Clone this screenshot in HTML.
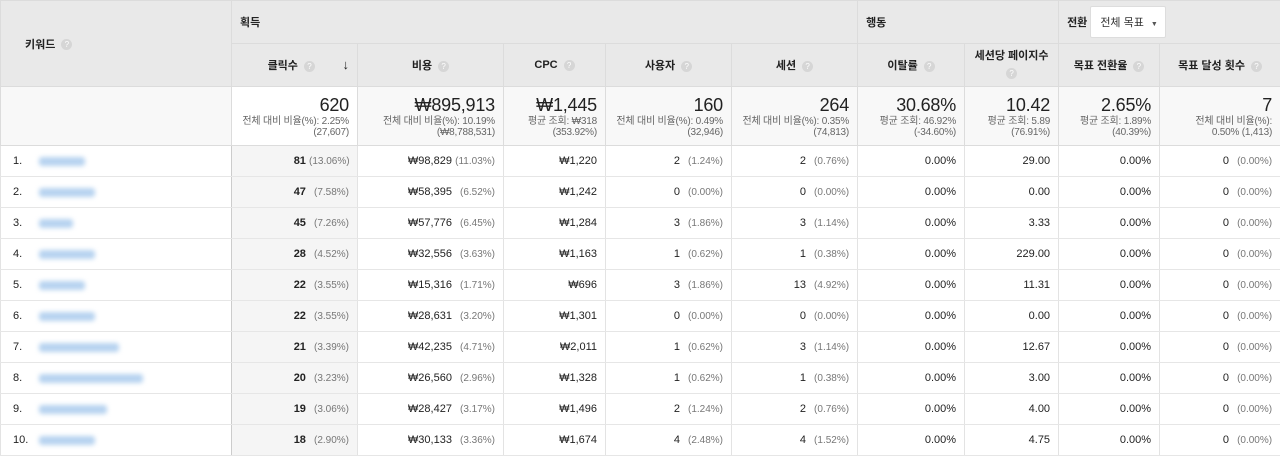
<!DOCTYPE html><html><head><meta charset="utf-8"><style>
body{margin:0;width:1280px;height:456px;overflow:hidden;background:#fff;font-family:"Liberation Sans","Noto Sans CJK KR",sans-serif;color:#222}
table{border-collapse:collapse;table-layout:fixed;width:1280px}
td,th{padding:0 8px;border:1px solid #dcdcdc;font-size:11px;overflow:hidden;white-space:nowrap}
th{background:#e9e9e9;font-weight:bold;color:#222}
.g{text-align:left;height:42px;vertical-align:middle}
.h{height:42px;text-align:center}
.q{display:inline-block;width:11px;height:11px;border-radius:50%;background:#d6d6d6;color:#fff;font-size:8px;line-height:11px;text-align:center;margin-left:6px;vertical-align:middle;font-weight:normal}
.tot td{height:58px;background:#f8f8f8;text-align:right;vertical-align:middle;color:#666;font-size:10px;line-height:11px;letter-spacing:-0.2px}
.tot td.w{background:#fff}
.tot b{display:block;font-size:18px;font-weight:normal;color:#222;line-height:21px}
.r td{height:30px;text-align:right;border-left:1px solid #e3e3e3;border-right:1px solid #e3e3e3;border-top:1px solid #e6e6e6;border-bottom:1px solid #e6e6e6}
.r td.k{text-align:left;border-right:1px solid #ccc;padding-left:12px}
.r td.s{background:#f5f5f5}
.p{color:#777;font-size:10px;display:inline-block;width:40px;text-align:right}
.n{display:inline-block;width:26px}
.bl{display:inline-block;height:9px;background:#b7d3f0;filter:blur(2.5px);vertical-align:middle;border-radius:3px}
.sel{display:inline-block;background:#fff;border:1px solid #ddd;border-radius:2px;padding:7px 7px 7px 9px;font-weight:normal;margin-left:3px;font-size:11px;color:#333}
.sel i{font-style:normal;font-size:7px;margin-left:7px;color:#555}
</style></head><body>
<table>
<colgroup><col style="width:231px"><col style="width:126px"><col style="width:146px"><col style="width:102px"><col style="width:126px"><col style="width:126px"><col style="width:107px"><col style="width:94px"><col style="width:101px"><col style="width:121px"></colgroup>
<tr><th rowspan="2" style="text-align:left;padding-left:24px">키워드<span class="q">?</span></th><th colspan="5" class="g">획득</th><th colspan="2" class="g">행동</th><th colspan="2" class="g">전환<span class="sel">전체 목표<i>▼</i></span></th></tr>
<tr><th class="h">클릭수<span class="q">?</span><span style="float:right;font-size:13px">↓</span></th><th class="h">비용<span class="q">?</span></th><th class="h">CPC<span class="q">?</span></th><th class="h">사용자<span class="q">?</span></th><th class="h">세션<span class="q">?</span></th><th class="h">이탈률<span class="q">?</span></th><th class="h" style="line-height:17px">세션당 페이지수<br><span class="q" style="margin:0">?</span></th><th class="h">목표 전환율<span class="q">?</span></th><th class="h">목표 달성 횟수<span class="q">?</span></th></tr>
<tr class="tot"><td></td><td class="w"><b>620</b>전체 대비 비율(%): 2.25%<br>(27,607)</td><td><b>₩895,913</b>전체 대비 비율(%): 10.19%<br>(₩8,788,531)</td><td><b>₩1,445</b>평균 조회: ₩318<br>(353.92%)</td><td><b>160</b>전체 대비 비율(%): 0.49%<br>(32,946)</td><td><b>264</b>전체 대비 비율(%): 0.35%<br>(74,813)</td><td><b>30.68%</b>평균 조회: 46.92%<br>(-34.60%)</td><td><b>10.42</b>평균 조회: 5.89<br>(76.91%)</td><td><b>2.65%</b>평균 조회: 1.89%<br>(40.39%)</td><td><b>7</b>전체 대비 비율(%):<br>0.50% (1,413)</td></tr>
<tr class="r"><td class="k"><span class="n">1.</span><span class="bl" style="width:46px"></span></td><td class="s"><b>81</b> <span class="p">(13.06%)</span></td><td>₩98,829 <span class="p">(11.03%)</span></td><td>₩1,220</td><td>2 <span class="p">(1.24%)</span></td><td>2 <span class="p">(0.76%)</span></td><td>0.00%</td><td>29.00</td><td>0.00%</td><td>0 <span class="p">(0.00%)</span></td></tr>
<tr class="r"><td class="k"><span class="n">2.</span><span class="bl" style="width:56px"></span></td><td class="s"><b>47</b> <span class="p">(7.58%)</span></td><td>₩58,395 <span class="p">(6.52%)</span></td><td>₩1,242</td><td>0 <span class="p">(0.00%)</span></td><td>0 <span class="p">(0.00%)</span></td><td>0.00%</td><td>0.00</td><td>0.00%</td><td>0 <span class="p">(0.00%)</span></td></tr>
<tr class="r"><td class="k"><span class="n">3.</span><span class="bl" style="width:34px"></span></td><td class="s"><b>45</b> <span class="p">(7.26%)</span></td><td>₩57,776 <span class="p">(6.45%)</span></td><td>₩1,284</td><td>3 <span class="p">(1.86%)</span></td><td>3 <span class="p">(1.14%)</span></td><td>0.00%</td><td>3.33</td><td>0.00%</td><td>0 <span class="p">(0.00%)</span></td></tr>
<tr class="r"><td class="k"><span class="n">4.</span><span class="bl" style="width:56px"></span></td><td class="s"><b>28</b> <span class="p">(4.52%)</span></td><td>₩32,556 <span class="p">(3.63%)</span></td><td>₩1,163</td><td>1 <span class="p">(0.62%)</span></td><td>1 <span class="p">(0.38%)</span></td><td>0.00%</td><td>229.00</td><td>0.00%</td><td>0 <span class="p">(0.00%)</span></td></tr>
<tr class="r"><td class="k"><span class="n">5.</span><span class="bl" style="width:46px"></span></td><td class="s"><b>22</b> <span class="p">(3.55%)</span></td><td>₩15,316 <span class="p">(1.71%)</span></td><td>₩696</td><td>3 <span class="p">(1.86%)</span></td><td>13 <span class="p">(4.92%)</span></td><td>0.00%</td><td>11.31</td><td>0.00%</td><td>0 <span class="p">(0.00%)</span></td></tr>
<tr class="r"><td class="k"><span class="n">6.</span><span class="bl" style="width:56px"></span></td><td class="s"><b>22</b> <span class="p">(3.55%)</span></td><td>₩28,631 <span class="p">(3.20%)</span></td><td>₩1,301</td><td>0 <span class="p">(0.00%)</span></td><td>0 <span class="p">(0.00%)</span></td><td>0.00%</td><td>0.00</td><td>0.00%</td><td>0 <span class="p">(0.00%)</span></td></tr>
<tr class="r"><td class="k"><span class="n">7.</span><span class="bl" style="width:80px"></span></td><td class="s"><b>21</b> <span class="p">(3.39%)</span></td><td>₩42,235 <span class="p">(4.71%)</span></td><td>₩2,011</td><td>1 <span class="p">(0.62%)</span></td><td>3 <span class="p">(1.14%)</span></td><td>0.00%</td><td>12.67</td><td>0.00%</td><td>0 <span class="p">(0.00%)</span></td></tr>
<tr class="r"><td class="k"><span class="n">8.</span><span class="bl" style="width:104px"></span></td><td class="s"><b>20</b> <span class="p">(3.23%)</span></td><td>₩26,560 <span class="p">(2.96%)</span></td><td>₩1,328</td><td>1 <span class="p">(0.62%)</span></td><td>1 <span class="p">(0.38%)</span></td><td>0.00%</td><td>3.00</td><td>0.00%</td><td>0 <span class="p">(0.00%)</span></td></tr>
<tr class="r"><td class="k"><span class="n">9.</span><span class="bl" style="width:68px"></span></td><td class="s"><b>19</b> <span class="p">(3.06%)</span></td><td>₩28,427 <span class="p">(3.17%)</span></td><td>₩1,496</td><td>2 <span class="p">(1.24%)</span></td><td>2 <span class="p">(0.76%)</span></td><td>0.00%</td><td>4.00</td><td>0.00%</td><td>0 <span class="p">(0.00%)</span></td></tr>
<tr class="r"><td class="k"><span class="n">10.</span><span class="bl" style="width:56px"></span></td><td class="s"><b>18</b> <span class="p">(2.90%)</span></td><td>₩30,133 <span class="p">(3.36%)</span></td><td>₩1,674</td><td>4 <span class="p">(2.48%)</span></td><td>4 <span class="p">(1.52%)</span></td><td>0.00%</td><td>4.75</td><td>0.00%</td><td>0 <span class="p">(0.00%)</span></td></tr>
</table>
</body></html>
